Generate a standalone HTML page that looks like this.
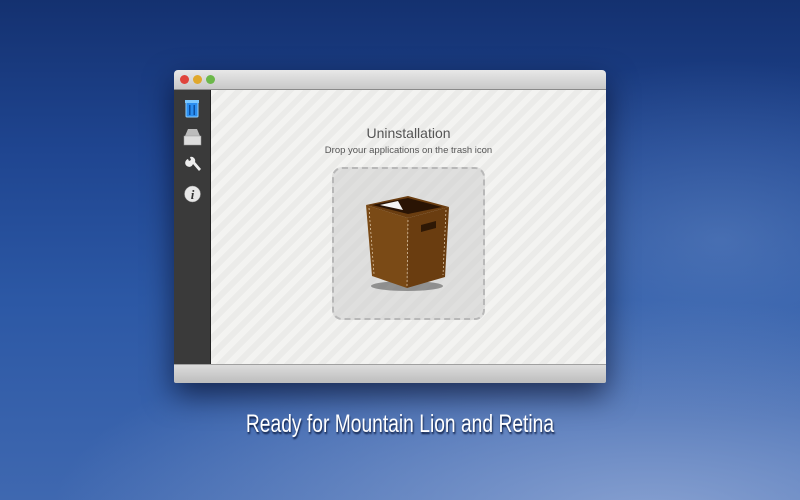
<!DOCTYPE html>
<html><head><meta charset="utf-8"><style>
*{margin:0;padding:0;box-sizing:border-box}
body{width:800px;height:500px;overflow:hidden;position:relative;font-family:"Liberation Sans",sans-serif;
background:radial-gradient(ellipse 300px 180px at 720px 240px,rgba(120,155,210,.4),transparent),radial-gradient(ellipse 600px 220px at 650px 520px,rgba(160,180,220,.75),transparent),linear-gradient(180deg,#143170 0%,#1f4590 30%,#2c58a5 60%,#3f68b0 100%);}
.win{position:absolute;left:174px;top:70px;width:432px;height:313px;box-shadow:0 12px 30px rgba(0,0,20,.6);border-radius:4px 4px 2px 2px;overflow:hidden}
.tb{position:absolute;left:0;top:0;width:432px;height:20px;background:linear-gradient(#e8e8e8,#c8c8c8);border-bottom:1px solid #8a8a8a}
.dot{position:absolute;top:5px;width:9px;height:9px;border-radius:50%}
.side{position:absolute;left:0;top:20px;width:37px;height:274px;background:#3a3a3a;border-right:1px solid #222}
.main{position:absolute;left:37px;top:20px;width:395px;height:274px;background:repeating-linear-gradient(-45deg,#f3f3f1 0 6px,#ebebe9 6px 12px)}
.bot{position:absolute;left:0;top:294px;width:432px;height:19px;background:linear-gradient(#dcdcdc,#bdbdbd);border-top:1px solid #a0a0a0}
.zone{position:absolute;left:121px;top:77px;width:153px;height:153px;border:2px dashed #b8b8b8;border-radius:10px;background:rgba(200,200,200,.45)}
h1{position:absolute;left:37px;width:395px;top:55px;text-align:center;font-weight:normal;font-size:14px;color:#555}
p{position:absolute;left:37px;width:395px;top:75px;text-align:center;font-size:9.5px;color:#555}
.cap{position:absolute;left:0;width:800px;top:410px;text-align:center;color:#fff;font-size:25px;text-shadow:1px 2px 2px #0a1a40;font-family:"Liberation Sans Narrow","Liberation Sans",sans-serif;transform:scaleX(.77)}
</style></head><body>
<div class="win">
<div class="tb"><div class="dot" style="left:6px;background:#e0443c"></div><div class="dot" style="left:19px;background:#e0a82c"></div><div class="dot" style="left:32px;background:#6cb84a"></div></div>
<div class="side">
<svg width="37" height="274" viewBox="0 0 37 274">
<rect x="12" y="12" width="12" height="15" rx="1" fill="#2a8ef0" stroke="#8fd0ff" stroke-width="1"/><rect x="11" y="10" width="14" height="3" fill="#7cc8ff"/><rect x="15" y="15" width="1.5" height="10" fill="#0b4fa0"/><rect x="19.5" y="15" width="1.5" height="10" fill="#0b4fa0"/>
<path d="M11 46 L14 39 L23 39 L26 46 Z" fill="#bbb"/><rect x="10" y="46" width="17" height="9" fill="#ddd" stroke="#999" stroke-width=".5"/>
<path d="M14 69 A4 4 0 1 0 19 74 L25 81 L27 79 L21 72 A4 4 0 0 0 16 67 L17 70 L15 71 Z" fill="#eee"/>
<circle cx="18.5" cy="104" r="8" fill="#e8e8e8" stroke="#999" stroke-width=".5"/><text x="18.5" y="109" text-anchor="middle" font-family="Liberation Serif" font-style="italic" font-weight="bold" font-size="13" fill="#333">i</text>
</svg></div>
<div class="main"><div class="zone"></div></div>
<h1>Uninstallation</h1>
<p>Drop your applications on the trash icon</p>
<svg style="position:absolute;left:0;top:0" width="432" height="313" viewBox="174 70 432 313">
<ellipse cx="407" cy="286" rx="36" ry="5" fill="rgba(0,0,0,.35)"/>
<path d="M366 205 L408 196 L449 207 L408 218 Z" fill="#6a3d10"/>
<path d="M372 205 L408 198 L442 207 L408 214 Z" fill="#2a1404"/>
<path d="M380 205 L398 201 L403 210 Z" fill="#f4f4f4"/>
<path d="M366 205 L408 218 L407 288 L372 276 Z" fill="#7a4a16"/>
<path d="M408 218 L449 207 L445 277 L407 288 Z" fill="#6a3d10"/>
<path d="M421 225 L436 221 L436 228 L421 232 Z" fill="#2e1805"/>
<path d="M408 220 L407 286 M369 208 L374 274 M446 210 L443 275" stroke="#e8d4b8" stroke-width=".7" stroke-dasharray="2 2" fill="none"/>
</svg>
<div class="bot"></div>
</div>
<div class="cap">Ready for Mountain Lion and Retina</div>
</body></html>
